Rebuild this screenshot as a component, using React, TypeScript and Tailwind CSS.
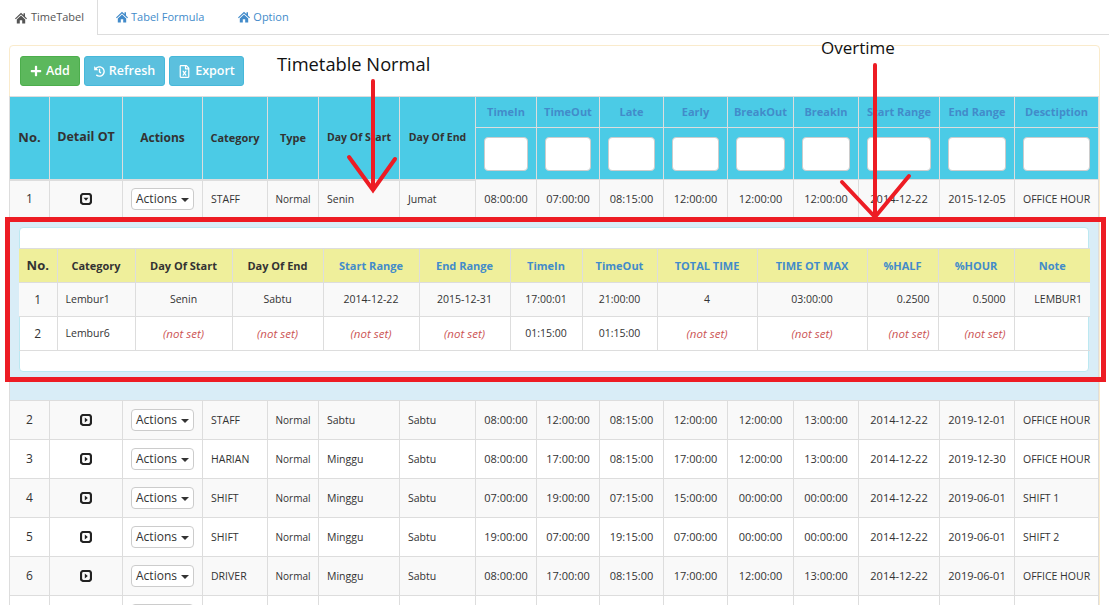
import { FaHistory, FaPlus, FaRegFileExcel } from "react-icons/fa";

const mainCols = [40, 73, 80, 65, 51, 81, 76, 61, 63, 64, 64, 66, 65, 81, 75, 84];
const innerCols = [38, 78, 97, 91, 96, 91, 72, 75, 100, 110, 71, 76, 76];

const filterHeads = ["TimeIn", "TimeOut", "Late", "Early", "BreakOut", "BreakIn", "Start Range", "End Range", "Desctiption"];

const rows = [
  ["2", "STAFF", "Sabtu", "Sabtu", "08:00:00", "12:00:00", "08:15:00", "12:00:00", "12:00:00", "13:00:00", "2014-12-22", "2019-12-01", "OFFICE HOUR"],
  ["3", "HARIAN", "Minggu", "Sabtu", "08:00:00", "17:00:00", "08:15:00", "17:00:00", "12:00:00", "13:00:00", "2014-12-22", "2019-12-30", "OFFICE HOUR"],
  ["4", "SHIFT", "Minggu", "Sabtu", "07:00:00", "19:00:00", "07:15:00", "15:00:00", "00:00:00", "00:00:00", "2014-12-22", "2019-06-01", "SHIFT 1"],
  ["5", "SHIFT", "Minggu", "Sabtu", "19:00:00", "07:00:00", "19:15:00", "07:00:00", "00:00:00", "00:00:00", "2014-12-22", "2019-06-01", "SHIFT 2"],
  ["6", "DRIVER", "Minggu", "Sabtu", "08:00:00", "17:00:00", "08:15:00", "17:00:00", "12:00:00", "13:00:00", "2014-12-22", "2019-06-01", "OFFICE HOUR"],
  ["", "", "", "", "", "", "", "", "", "", "", "", ""],
];

function HomeIcon({ className }: { className: string }) {
  return (
    <svg viewBox="0 0 12 12" className={className} fill="currentColor">
      <path d="M6 .8 0 6.4l.8.8L6 2.4l5.2 4.8.8-.8-2-1.9V1.2H8.5v1.8z" />
      <path d="M6 3.5 1.8 7.4V11.5h3V8.3h2.4v3.2h3V7.4z" />
    </svg>
  );
}

function ExpandIcon({ open }: { open?: boolean }) {
  return (
    <svg viewBox="0 0 12 12" className="mx-auto h-3 w-3 text-[#222]">
      <rect x="1" y="1" width="10" height="10" rx="2.5" fill="none" stroke="currentColor" strokeWidth="2.2" />
      {open ? <path d="M3.5 4.8 8.5 4.8 6 7.8z" fill="currentColor" /> : <path d="M4.8 3.5 7.8 6 4.8 8.5z" fill="currentColor" />}
    </svg>
  );
}

// the last row is cut by the window, only the top edge of its button shows
function ActionsButton({ blank }: { blank?: boolean }) {
  return (
    <button className="flex h-[22px] w-[63px] items-center justify-center gap-1 rounded-[4px] border border-[#ccc] bg-white text-[12px] text-[#333]">
      {!blank && "Actions"}
      {!blank && <span className="mt-[2px] border-x-[4px] border-t-[4px] border-x-transparent border-t-[#333]" />}
    </button>
  );
}

function NotSet() {
  return <span className="text-[11.5px] italic text-[#c55]">(not set)</span>;
}

function Tab({ label, active }: { label: string; active?: boolean }) {
  return (
    <div
      className={
        active
          ? "-mb-px flex h-[35px] w-[98px] items-center gap-1 border-r border-[#ddd] bg-white pl-[15px] text-[#555]"
          : "flex h-[34px] items-center gap-[3px] text-[#428bca]"
      }
    >
      <HomeIcon className="h-3 w-3" />
      {label}
    </div>
  );
}

function OvertimeTable() {
  const th = "border border-[#ddd] pt-px font-bold";
  const td = "border border-[#ddd] px-2 pt-px text-center";
  return (
    <div className="mx-[9px] mb-[28px] mt-[8px] rounded-[4px] border border-[#bce8f1] bg-white pb-[20px] pt-[20px]">
      <table className="-ml-px w-[1071px] table-fixed border-collapse text-[10.5px] text-[#333]">
        <colgroup>
          {innerCols.map((w, i) => (
            <col key={i} style={{ width: w }} />
          ))}
        </colgroup>
        <thead>
          <tr className="h-[34px] bg-[#efef9b] text-[11px]">
            <th className={th + " border-l-0 text-[13px]"}>No.</th>
            <th className={th}>Category</th>
            <th className={th}>Day Of Start</th>
            <th className={th}>Day Of End</th>
            {["Start Range", "End Range", "TimeIn", "TimeOut", "TOTAL TIME", "TIME OT MAX", "%HALF", "%HOUR", "Note"].map((h) => (
              <th key={h} className={th + " text-[#428bca] last:border-r-0"}>
                {h}
              </th>
            ))}
          </tr>
        </thead>
        <tbody>
          <tr className="h-[34px] bg-[#f9f9f9]">
            <td className={td + " border-l-0 text-[12px]"}>1</td>
            <td className={td + " text-left"}>Lembur1</td>
            <td className={td}>Senin</td>
            <td className={td}>Sabtu</td>
            <td className={td}>2014-12-22</td>
            <td className={td}>2015-12-31</td>
            <td className={td}>17:00:01</td>
            <td className={td}>21:00:00</td>
            <td className={td}>4</td>
            <td className={td}>03:00:00</td>
            <td className={td + " text-right"}>0.2500</td>
            <td className={td + " text-right"}>0.5000</td>
            <td className={td + " border-r-0 text-right"}>LEMBUR1</td>
          </tr>
          <tr className="h-[34px]">
            <td className={td + " border-l-0 text-[12px]"}>2</td>
            <td className={td + " text-left"}>Lembur6</td>
            <td className={td}><NotSet /></td>
            <td className={td}><NotSet /></td>
            <td className={td}><NotSet /></td>
            <td className={td}><NotSet /></td>
            <td className={td}>01:15:00</td>
            <td className={td}>01:15:00</td>
            <td className={td}><NotSet /></td>
            <td className={td}><NotSet /></td>
            <td className={td + " text-right"}><NotSet /></td>
            <td className={td + " text-right"}><NotSet /></td>
            <td className={td + " border-r-0"} />
          </tr>
        </tbody>
      </table>
    </div>
  );
}

function DataRow({ cells, striped, open }: { cells: string[]; striped?: boolean; open?: boolean }) {
  const td = "whitespace-nowrap border border-[#ddd] px-2 pt-px text-left text-[10.5px]";
  const center = "border border-[#ddd] text-center";
  const [no, category, start, end, ...rest] = cells;
  const note = rest[rest.length - 1];
  return (
    <tr className={striped ? "h-[39px] bg-[#f9f9f9]" : "h-[39px] bg-white"}>
      <td className={center + " text-[12px]"}>{no}</td>
      <td className={center}>
        <ExpandIcon open={open} />
      </td>
      <td className={center}>
        <div className="flex justify-center">
          <ActionsButton blank={!no} />
        </div>
      </td>
      <td className={td}>{category}</td>
      <td className={center + " text-[10px]"}>{no && "Normal"}</td>
      <td className={td}>{start}</td>
      <td className={td}>{end}</td>
      {rest.slice(0, -1).map((c, i) => (
        <td key={i} className={center + " pt-px"}>
          {c}
        </td>
      ))}
      <td className={td}>{note}</td>
    </tr>
  );
}

function Annotations() {
  return (
    <>
      <div className="absolute left-[277px] top-[52px] text-[18.3px] leading-6 text-[#111]">Timetable Normal</div>
      <div className="absolute left-[821px] top-[36px] text-[17px] leading-6 text-[#111]">Overtime</div>
      <div className="absolute left-[5px] top-[217px] h-[165px] w-[1101px] border-[5px] border-[#ed1c24]" />
      <svg className="absolute left-0 top-0 h-[605px] w-[1109px]" fill="none" stroke="#ed1c24" strokeWidth="4" strokeLinecap="round">
        <path d="M373 81V190M349 157 373 190 395 159" />
        <path d="M875 65V217M842 182 875 217 909 176" />
      </svg>
    </>
  );
}

export default function App() {
  const head = "border border-[#ddd] font-bold text-center";
  const spanHead = head + " border-b-2";
  const btn = "flex h-[30px] items-center justify-center gap-1 rounded-[3px] border text-[12.5px] font-semibold text-white";
  return (
    <div className="relative h-[605px] w-[1109px] overflow-hidden bg-white font-['Open_Sans',sans-serif] text-[11px] text-[#333]">
      {/* Tabs */}
      <div className="flex h-[35px] items-start gap-[18px] border-b border-[#ddd] text-[11px]">
        <Tab label="TimeTabel" active />
        <Tab label="Tabel Formula" />
        <div className="ml-[16px]">
          <Tab label="Option" />
        </div>
      </div>

      {/* Panel */}
      <div className="ml-[9px] mt-[10px] w-[1091px] rounded-[4px] border border-[#faebcc]">
        <div className="flex gap-1 p-[10px]">
          <button className={btn + " w-[60px] border-[#4cae4c] bg-[#5cb85c]"}>
            <FaPlus className="h-3 w-3" /> Add
          </button>
          <button className={btn + " w-[81px] border-[#46b8da] bg-[#5bc0de]"}>
            <FaHistory className="h-[11px] w-[11px]" /> Refresh
          </button>
          <button className={btn + " w-[75px] border-[#46b8da] bg-[#5bc0de]"}>
            <FaRegFileExcel className="h-[13px] w-[13px]" /> Export
          </button>
        </div>

        <table className="-ml-px w-[1089px] table-fixed border-collapse">
          <colgroup>
            {mainCols.map((w, i) => (
              <col key={i} style={{ width: w }} />
            ))}
          </colgroup>
          <thead className="bg-[#4bcbe6] text-[#333]">
            <tr className="h-[31px]">
              <th rowSpan={2} className={spanHead + " text-[13px]"}>No.</th>
              <th rowSpan={2} className={spanHead + " text-[12.5px]"}>Detail OT</th>
              <th rowSpan={2} className={spanHead + " text-[12px]"}>Actions</th>
              <th rowSpan={2} className={spanHead}>Category</th>
              <th rowSpan={2} className={spanHead}>Type</th>
              <th rowSpan={2} className={spanHead + " text-[10.5px]"}>Day Of Start</th>
              <th rowSpan={2} className={spanHead + " text-[10.5px]"}>Day Of End</th>
              {filterHeads.map((h) => (
                <th key={h} className={head + " pt-px text-[#428bca]"}>
                  {h}
                </th>
              ))}
            </tr>
            <tr className="h-[52px]">
              {filterHeads.map((h) => (
                <th key={h} className="border border-[#ddd] px-2">
                  <input className="block h-[34px] w-full rounded-[4px] border border-[#ccc] bg-white" />
                </th>
              ))}
            </tr>
          </thead>
          <tbody>
            <DataRow
              striped
              open
              cells={["1", "STAFF", "Senin", "Jumat", "08:00:00", "07:00:00", "08:15:00", "12:00:00", "12:00:00", "12:00:00", "2014-12-22", "2015-12-05", "OFFICE HOUR"]}
            />
            <tr className="bg-[#d9edf7]">
              <td colSpan={16} className="border border-[#ddd] p-0">
                <OvertimeTable />
              </td>
            </tr>
            {rows.map((r, i) => (
              <DataRow key={i} cells={r} striped={i % 2 === 0} />
            ))}
          </tbody>
        </table>
      </div>

      <Annotations />
    </div>
  );
}
